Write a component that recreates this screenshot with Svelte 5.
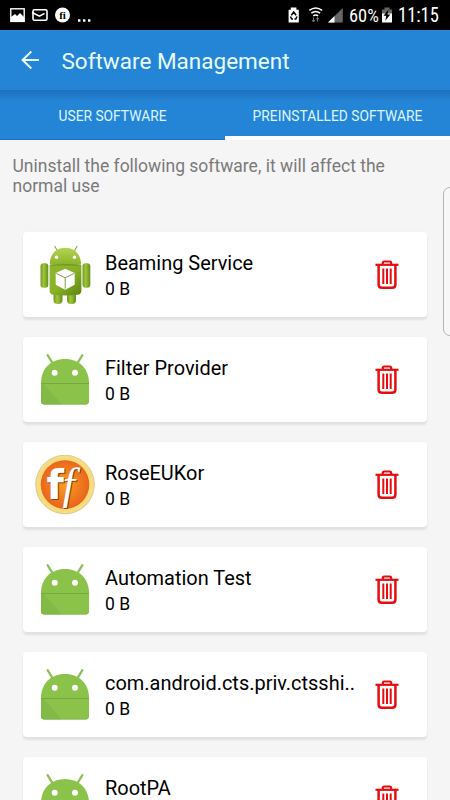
<script lang="ts">
  type App = { name: string; size: string; icon: "robot" | "default" | "flip" };

  let active = $state(1);

  const tabs = ["User software", "Preinstalled software"];

  const apps: App[] = [
    { name: "Beaming Service", size: "0 B", icon: "robot" },
    { name: "Filter Provider", size: "0 B", icon: "default" },
    { name: "RoseEUKor", size: "0 B", icon: "flip" },
    { name: "Automation Test", size: "0 B", icon: "default" },
    { name: "com.android.cts.priv.ctsshi..", size: "0 B", icon: "default" },
    { name: "RootPA", size: "0 B", icon: "default" },
  ];
</script>

<div class="screen">
  <div class="status">
    <svg class="notifications" width="100" height="30" viewBox="0 0 100 30">
      <rect x="10.8" y="8.8" width="13.4" height="12.6" fill="none" stroke="#fff" stroke-width="1.4" />
      <path d="M11 21v-4l4-3 2 2 3-3 4 4v4z" fill="#fff" />
      <rect x="33" y="9.8" width="14" height="10.4" rx="1.5" fill="none" stroke="#fff" stroke-width="1.6" />
      <path d="M32 12.5l7.5 3.7 5-2.8" fill="none" stroke="#fff" stroke-width="1.6" />
      <circle cx="62.5" cy="15" r="7.5" fill="#fff" />
      <text x="62.5" y="18.5" text-anchor="middle" class="fi">fi</text>
      <path d="M78 19.3h2.4v2.4H78zM83 19.3h2.4v2.4H83zM88 19.3h2.4v2.4H88z" fill="#fff" />
    </svg>
    <svg width="57" height="30" viewBox="287 0 57 30">
      <path d="M288.6 9.8h2.2V7.6h5.6v2.2h2.4V22.5h-10.2z" fill="#fff" />
      <path d="M291.3 15.2l2.4-3.2 2.4 3.2M297 16.5l-1.2 2.5h-1.3M290.5 16.5l1.2 2.5h1.3" fill="none" stroke="#000" stroke-width="1.5" />
      <path d="M309.3 10.4q6.4-5 12.8 0M311.3 13.2q4.4-3.4 8.8 0M313.3 15.8q2.4-1.8 4.8 0" fill="none" stroke="#fff" stroke-width="1.5" />
      <path d="M313.500 17.500v4M317.500 17.500v4M312 20l1.500 2 1.500-2M316 19.500l1.500-2 1.500 2" fill="none" stroke="#777" stroke-width="1" />
      <path d="M328 22.500l14.800-14.500v14.500z" fill="#666" />
      <path d="M328 22.500l6.500-6.400v6.400z" fill="#fff" />
    </svg>
    <span class="percent">60%</span>
    <svg width="12" height="30" viewBox="0 0 12 30">
      <path d="M1 9.500h2.500V7.500h5v2H11V14H1z" fill="#666" />
      <path d="M1 13.500h10v9H1z" fill="#fff" />
      <path d="M7.500 9.500l-5 6.300h2.800l-1 5 5-6.300H6.500z" fill="#000" />
    </svg>
    <span class="clock">11:15</span>
  </div>

  <header>
    <button class="back" aria-label="Back">
      <svg width="20" height="20" viewBox="0 0 20 20">
        <path d="M11.300 1.500L2.600 10l8.700 8.500M2.500 10h16.400" fill="none" stroke="#e9ffff" stroke-width="2" />
      </svg>
    </button>
    <h1>Software Management</h1>
  </header>

  <nav>
    {#each tabs as tab, i}
      <button class="tab" class:active={active === i} onclick={() => (active = i)}>
        <span>{tab}</span>
      </button>
    {/each}
  </nav>

  <main>
    <p class="warning">Uninstall the following software, it will affect the normal use</p>

    <ul>
      {#each apps as app (app.name)}
        <li>
          {#if app.icon === "robot"}
            <svg class="icon" viewBox="0 0 60 60">
              <defs>
                <linearGradient id="robot-body" x1="0" y1="0" x2="1" y2="1">
                  <stop offset="0" stop-color="#8fb52c" />
                  <stop offset="0.5" stop-color="#88b127" />
                  <stop offset="1" stop-color="#5c8414" />
                </linearGradient>
                <linearGradient id="robot-head" x1="0" y1="0" x2="0" y2="1">
                  <stop offset="0" stop-color="#b5d455" />
                  <stop offset="1" stop-color="#88b026" />
                </linearGradient>
                <linearGradient id="robot-arm" x1="0" y1="0" x2="1" y2="0">
                  <stop offset="0" stop-color="#6f9820" />
                  <stop offset="0.4" stop-color="#a0c43b" />
                  <stop offset="1" stop-color="#64901a" />
                </linearGradient>
              </defs>
              <path d="M23 6.500L19.800 1.500M39 6.500L42 1.500" stroke="#8eaf43" stroke-width="1.200" stroke-linecap="round" />
              <rect x="18.500" y="41" width="9" height="18" rx="4" fill="url(#robot-arm)" />
              <rect x="32" y="41" width="9" height="18" rx="4" fill="url(#robot-arm)" />
              <rect x="5.500" y="18.300" width="7.800" height="24.500" rx="3" fill="url(#robot-arm)" />
              <rect x="47.500" y="18.300" width="7.800" height="24.500" rx="3" fill="url(#robot-arm)" />
              <path d="M14.800 19.500C14.500 9.500 21 2.800 30.300 2.800S46.200 9.500 46 19.500q-15.500 3-31.200 0z" fill="url(#robot-head)" />
              <path d="M14.600 21q16-2 31.800 0V45.500q0 4-4 4.300-12 1.300-24 0-3.800-.3-3.800-4.300z" fill="url(#robot-body)" />
              <path d="M14.800 20.500q15.700-1.500 31.400 0" fill="none" stroke="#638a19" stroke-width="0.900" />
              <circle cx="21.500" cy="12.300" r="1.700" fill="#fff" />
              <circle cx="39.500" cy="12.300" r="1.700" fill="#fff" />
              <path d="M30.200 23.800l9.500 4.200v11.800l-9.500 4.900-9.500-4.900V28z" fill="#fff" />
              <path d="M21.200 28.400l9 4.400 9-4.400M30.200 32.800v11" fill="none" stroke="#849b51" stroke-width="1" />
            </svg>
          {:else if app.icon === "flip"}
            <svg class="icon" viewBox="0 0 60 60">
              <defs>
                <radialGradient id="flip-fill">
                  <stop offset="0" stop-color="#f8a01f" />
                  <stop offset="1" stop-color="#e9651c" />
                </radialGradient>
              </defs>
              <circle cx="30" cy="29.500" r="29.300" fill="#fbdc7c" stroke="#d5ca98" stroke-width="1" />
              <circle cx="30" cy="29.500" r="24.300" fill="url(#flip-fill)" />
              <text x="11.500" y="43.500" class="slab">f</text>
              <text x="27.500" y="44" class="script">f</text>
            </svg>
          {:else}
            <svg class="icon" viewBox="0 0 60 60">
              <path d="M12.600 5.200l4.600 7.500M47.400 5.200l-4.600 7.500" stroke="#8bbf57" stroke-width="2.200" stroke-linecap="round" />
              <path d="M6 33C6 18.500 16 9 30 9s24 9.500 24 24v18.200q0 3-3 3H9q-3 0-3-3z" fill="#8bc34a" />
              <path d="M6 33.500h2l15 16.500 3 4.200H9q-3 0-3-3z" fill="#82b947" />
              <path d="M6 33.500h48" stroke="#75a93e" stroke-width="1" />
              <path d="M6.500 52.500q.8 1.700 2.500 1.700h42q1.700 0 2.500-1.700" fill="none" stroke="#7eae4e" stroke-width="0.800" />
              <circle cx="19.700" cy="22.800" r="3" fill="#fff" />
              <circle cx="40" cy="22.800" r="3" fill="#fff" />
            </svg>
          {/if}

          <div class="info">
            <span class="name">{app.name}</span>
            <span class="size">{app.size}</span>
          </div>

          <button class="delete" aria-label="Uninstall {app.name}">
            <svg width="24" height="30" viewBox="0 0 24 30">
              <g fill="none" stroke="#e60d10">
                <path d="M.500 4.800h23" stroke-width="2.200" />
                <path d="M7.800 4.500V3q0-1.500 1.500-1.500h5.400q1.500 0 1.500 1.500v1.500" stroke-width="2.200" />
                <path d="M3.600 5v19.500q0 3.300 3.300 3.300h10.200q3.300 0 3.300-3.300V5" stroke-width="2.500" />
                <path d="M8.300 8.500v15.500M12 8.500v15.500M15.700 8.500v15.500" stroke-width="2" />
              </g>
            </svg>
          </button>
        </li>
      {/each}
    </ul>
  </main>

  <div class="edge-handle"></div>
</div>

<style>
  :global(body) {
    margin: 0;
  }

  .screen {
    position: relative;
    width: 450px;
    height: 800px;
    overflow: hidden;
    background: #f5f5f5;
    font-family: Roboto, sans-serif;
  }

  button {
    padding: 0;
    border: 0;
    background: none;
    font: inherit;
  }

  svg {
    display: block;
    flex: none;
  }

  .status {
    display: flex;
    align-items: center;
    height: 30px;
    background: #000;
    color: #fff;
  }

  .notifications {
    margin-right: 187px;
  }

  .fi {
    font: bold 11px "Liberation Serif", serif;
  }

  .percent {
    width: 30px;
    margin: 1px 2px 0 5px;
    font-size: 19px;
    font-stretch: condensed;
    transform: scaleX(0.97);
    transform-origin: left;
  }

  .clock {
    margin: 1px 0 0 4.5px;
    font-size: 19.5px;
    font-stretch: condensed;
    transform: scaleX(0.95);
    transform-origin: left;
  }

  header {
    display: flex;
    align-items: center;
    height: 60px;
    background: #2485d7;
  }

  .back {
    margin: 0 0 0 19.5px;
  }

  h1 {
    margin: 2px 0 0 22px;
    color: #e9ffff;
    font-size: 22.5px;
    font-weight: 400;
    white-space: nowrap;
  }

  nav {
    display: grid;
    grid-template-columns: 1fr 1fr;
    height: 50px;
    background: linear-gradient(#1f70bd, #2485d7 12px);
  }

  .tab {
    padding-top: 2px;
    border-bottom: 1px solid #1b75c6;
    color: #def5ff;
    font-size: 13.8px;
    text-transform: uppercase;
    white-space: nowrap;
  }

  .tab.active {
    padding-top: 5px;
    border-bottom: 4px solid #fff;
  }

  .warning {
    margin: 0;
    padding: 16px 40px 0 12.5px;
    color: #7a7a7a;
    font-size: 17.5px;
    line-height: 20px;
  }

  ul {
    display: flex;
    flex-direction: column;
    gap: 20px;
    margin: 0;
    padding: 36px 23px 0;
    list-style: none;
  }

  li {
    display: flex;
    align-items: center;
    box-sizing: border-box;
    height: 85px;
    padding: 0 28.5px 0 12px;
    border-radius: 4px;
    background: #fff;
    box-shadow: 0 3px 2px #e1e1e1, 0 0 2px #f0f0f0;
  }

  .icon {
    width: 60px;
    height: 60px;
  }

  .slab,
  .script {
    fill: #fff;
    text-shadow: 1px 1px 0 #8c3d12;
  }

  .slab {
    font: bold 40px "DejaVu Sans", sans-serif;
  }

  .script {
    font: italic 45px "Liberation Serif", serif;
  }

  .info {
    display: flex;
    flex: 1;
    flex-direction: column;
    gap: 1px;
    margin: 2px 0 0 10px;
    color: #000;
    white-space: nowrap;
  }

  .name {
    font-size: 19.95px;
    line-height: 25px;
  }

  .size {
    font-size: 17.5px;
    line-height: 24px;
  }

  /* Edge panel grip of the phone, sits over the list */
  .edge-handle {
    position: absolute;
    top: 187px;
    right: -8px;
    width: 13px;
    height: 147px;
    border: 1px solid #b5b5b5;
    border-radius: 7px;
    background: #f7f7f7;
  }
</style>
